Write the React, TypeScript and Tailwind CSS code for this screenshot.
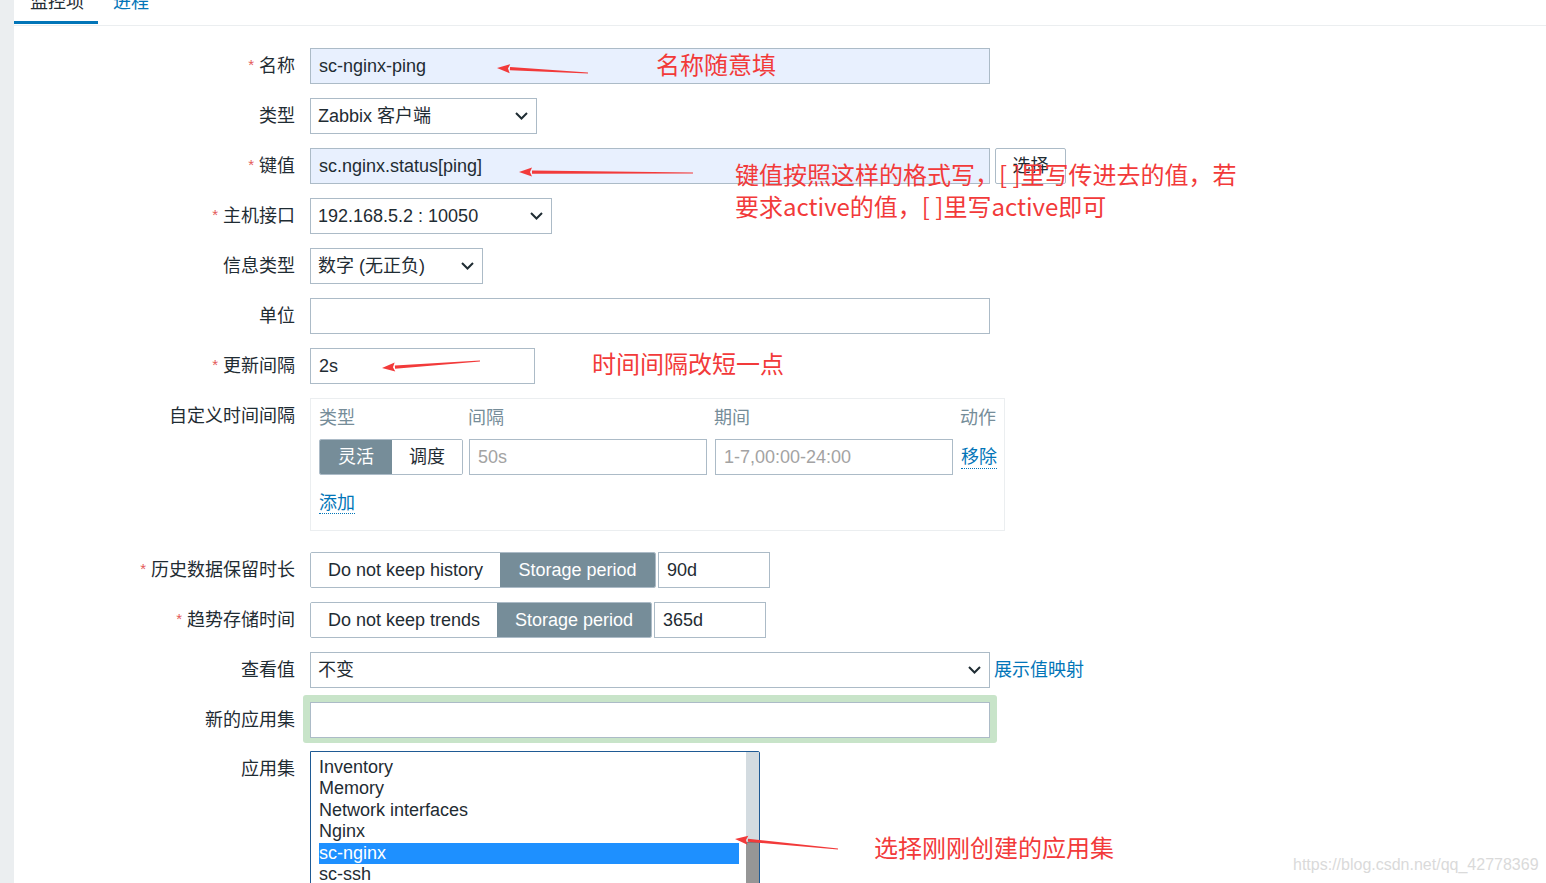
import React from 'react';
import clsx from 'clsx';

const Chevron = ({ className }: { className?: string }) => (
  <svg className={className} width="13" height="8" viewBox="0 0 13 8" fill="none">
    <polyline points="1,1 6.5,6.5 12,1" stroke="#1f2c33" strokeWidth="2" />
  </svg>
);

const Row: React.FC<{
  label: string;
  required?: boolean;
  className?: string;
  labelClass?: string;
  children: React.ReactNode;
}> = ({ label, required, className, labelClass, children }) => (
  <div className={clsx('flex items-start', className)}>
    <div
      className={clsx(
        'w-[281px] h-[36px] shrink-0 text-right leading-[36px] text-[18px] text-[#1f2c33] overflow-visible',
        labelClass
      )}
    >
      {required && <span className="text-[#e45959] text-[15px] leading-[0] mr-[5px] relative -top-[2px]">*</span>}
      {label}
    </div>
    <div className="ml-[15px] flex items-start">{children}</div>
  </div>
);

const TextInput: React.FC<{ value?: string; width: string; filled?: boolean; placeholder?: boolean }> = ({
  value,
  width,
  filled,
  placeholder,
}) => (
  <div
    className={clsx(
      'h-[36px] border border-[#acbbc7] pl-[8px] leading-[34px] text-[18px] whitespace-nowrap overflow-hidden',
      filled ? 'bg-[#e8f0fe]' : 'bg-white',
      placeholder ? 'text-[#a3a3a3]' : 'text-[#1f2c33]',
      width
    )}
  >
    {value}
  </div>
);

const Select: React.FC<{ value: string; width: string }> = ({ value, width }) => (
  <div
    className={clsx(
      'h-[36px] border border-[#acbbc7] bg-white pl-[7px] pr-[8px] flex items-center justify-between text-[18px] text-[#1f2c33]',
      width
    )}
  >
    <span>{value}</span>
    <Chevron />
  </div>
);

// segmented radio list as used for history / trends / interval type
const Segmented: React.FC<{ items: { label: string; w: string; active?: boolean }[] }> = ({ items }) => (
  <div className="flex h-[36px] border border-[#acbbc7] rounded-[2px] overflow-hidden">
    {items.map((it) => (
      <div
        key={it.label}
        className={clsx(
          'flex items-center justify-center text-[18px]',
          it.w,
          it.active ? 'bg-[#768d99] text-white' : 'bg-white text-[#1f2c33]'
        )}
      >
        {it.label}
      </div>
    ))}
  </div>
);

const Arrow: React.FC<{ x1: number; y1: number; x2: number; y2: number }> = ({ x1, y1, x2, y2 }) => {
  // tail (x1,y1) -> head (x2,y2)
  const dx = x2 - x1;
  const dy = y2 - y1;
  const len = Math.hypot(dx, dy);
  const ux = dx / len;
  const uy = dy / len;
  const px = -uy;
  const py = ux;
  const bx = x2 - ux * 13;
  const by = y2 - uy * 13;
  const head = `${x2},${y2} ${bx + px * 4.5},${by + py * 4.5} ${bx + ux * 2},${by + uy * 2} ${bx - px * 4.5},${by - py * 4.5}`;
  const body = `${x1 + px * 0.4},${y1 + py * 0.4} ${bx + px * 1.6},${by + py * 1.6} ${bx - px * 1.6},${by - py * 1.6} ${x1 - px * 0.4},${y1 - py * 0.4}`;
  return (
    <g>
      <polygon points={body} fill="#f23a3a" />
      <polygon points={head} fill="#f23a3a" />
    </g>
  );
};

export default function App() {
  return (
    <div className="relative w-[1546px] h-[883px] overflow-hidden bg-white flex font-['Liberation_Sans','Noto_Sans_CJK_SC',sans-serif]">
      <div className="w-[14px] shrink-0 bg-[#ebeef0]" />

      <div className="flex-1 flex flex-col">
        {/* tabs */}
        <div className="h-[26px] shrink-0 border-b border-[#ebeef0] flex items-start">
          <div className="h-[24px] w-[84px] border-b-[3px] border-[#0275b8] pl-[16px]">
            <span className="relative -top-[10px] text-[18px] leading-[24px] text-[#1f2c33]">监控项</span>
          </div>
          <div className="h-[24px] pl-[15px]">
            <span className="relative -top-[10px] text-[18px] leading-[24px] text-[#0275b8]">进程</span>
          </div>
        </div>

        <div className="mt-[22px] flex flex-col">
          <Row label="名称" required className="mb-[14px]">
            <TextInput value="sc-nginx-ping" width="w-[680px]" filled />
          </Row>
          <Row label="类型" className="mb-[14px]">
            <Select value="Zabbix 客户端" width="w-[227px]" />
          </Row>
          <Row label="键值" required className="mb-[14px]">
            <TextInput value="sc.nginx.status[ping]" width="w-[680px]" filled />
            <div className="ml-[5px] h-[36px] w-[71px] border border-[#acbbc7] rounded-[2px] bg-white flex items-center justify-center text-[18px] text-[#1f2c33]">
              选择
            </div>
          </Row>
          <Row label="主机接口" required className="mb-[14px]">
            <Select value="192.168.5.2 : 10050" width="w-[242px]" />
          </Row>
          <Row label="信息类型" className="mb-[14px]">
            <Select value="数字 (无正负)" width="w-[173px]" />
          </Row>
          <Row label="单位" className="mb-[14px]">
            <TextInput width="w-[680px]" />
          </Row>
          <Row label="更新间隔" required className="mb-[14px]">
            <TextInput value="2s" width="w-[225px]" />
          </Row>

          <Row label="自定义时间间隔" className="mb-[21px]" labelClass="leading-[34px]">
            <div className="w-[695px] h-[133px] border border-[#ebeef0] pl-[8px] pt-[9px]">
              <div className="flex text-[18px] leading-[20px] text-[#768d99]">
                <div className="w-[149px]">类型</div>
                <div className="w-[246px]">间隔</div>
                <div className="w-[246px]">期间</div>
                <div>动作</div>
              </div>
              <div className="mt-[11px] flex items-center">
                <Segmented
                  items={[
                    { label: '灵活', w: 'w-[72px]', active: true },
                    { label: '调度', w: 'w-[70px]' },
                  ]}
                />
                <div className="ml-[6px]">
                  <TextInput value="50s" width="w-[238px]" placeholder />
                </div>
                <div className="ml-[8px]">
                  <TextInput value="1-7,00:00-24:00" width="w-[238px]" placeholder />
                </div>
                <span className="ml-[8px] text-[18px] leading-[22px] text-[#0275b8] border-b border-dotted border-[#0275b8]">
                  移除
                </span>
              </div>
              <div className="mt-[17px]">
                <span className="text-[18px] leading-[22px] text-[#0275b8] border-b border-dotted border-[#0275b8]">
                  添加
                </span>
              </div>
            </div>
          </Row>

          <Row label="历史数据保留时长" required className="mb-[14px]">
            <Segmented
              items={[
                { label: 'Do not keep history', w: 'w-[189px]' },
                { label: 'Storage period', w: 'w-[155px]', active: true },
              ]}
            />
            <div className="ml-[2px]">
              <TextInput value="90d" width="w-[112px]" />
            </div>
          </Row>
          <Row label="趋势存储时间" required className="mb-[14px]">
            <Segmented
              items={[
                { label: 'Do not keep trends', w: 'w-[186px]' },
                { label: 'Storage period', w: 'w-[154px]', active: true },
              ]}
            />
            <div className="ml-[2px]">
              <TextInput value="365d" width="w-[112px]" />
            </div>
          </Row>
          <Row label="查看值" className="mb-[7px]">
            <Select value="不变" width="w-[680px]" />
            <span className="ml-[4px] text-[18px] leading-[36px] text-[#0275b8]">展示值映射</span>
          </Row>
          <Row label="新的应用集" className="mb-[8px]" labelClass="mt-[7px]">
            <div className="-ml-[7px] px-[7px] pt-[7px] pb-[5px] rounded-[3px] bg-[#c8e4c9]">
              <TextInput width="w-[680px]" />
            </div>
          </Row>
          <Row label="应用集">
            <div className="w-[450px] h-[140px] border border-[#1f5a94] rounded-tr-[2px] bg-white flex">
              <div className="flex-1 pl-[8px] pr-[7px] pt-[5px] text-[18px] text-[#1f2c33]">
                {['Inventory', 'Memory', 'Network interfaces', 'Nginx', 'sc-nginx', 'sc-ssh'].map((name) => (
                  <div
                    key={name}
                    className={clsx(
                      'h-[21.4px] leading-[21.4px] whitespace-nowrap',
                      name === 'sc-nginx' && 'bg-[#1e90ff] text-white'
                    )}
                  >
                    {name}
                  </div>
                ))}
              </div>
              <div className="w-[13px] flex flex-col">
                <div className="h-[90px] bg-[#d3dbe0]" />
                <div className="flex-1 bg-[#969696] border-t border-[#7c7c7c]" />
              </div>
            </div>
          </Row>
        </div>
      </div>

      {/* red notes over the form */}
      <svg className="absolute left-0 top-0 pointer-events-none" width="1546" height="883">
        <Arrow x1={588} y1={73} x2={497} y2={68} />
        <Arrow x1={693} y1={173} x2={519} y2={172} />
        <Arrow x1={480} y1={361} x2={382} y2={368} />
        <Arrow x1={838} y1={849} x2={735} y2={839} />
      </svg>
      <div className="absolute left-[656px] top-[48px] text-[24px] leading-[32px] text-[#f23a3a] font-['Noto_Sans_CJK_SC',sans-serif]">
        名称随意填
      </div>
      <div className="absolute left-[735px] top-[158px] text-[24px] leading-[32px] text-[#f23a3a] font-['Noto_Sans_CJK_SC',sans-serif] whitespace-nowrap">
        <div>键值按照这样的格式写，[ ]里写传进去的值，若</div>
        <div>要求active的值，[ ]里写active即可</div>
      </div>
      <div className="absolute left-[592px] top-[347px] text-[24px] leading-[32px] text-[#f23a3a] font-['Noto_Sans_CJK_SC',sans-serif]">
        时间间隔改短一点
      </div>
      <div className="absolute left-[874px] top-[831px] text-[24px] leading-[32px] text-[#f23a3a] font-['Noto_Sans_CJK_SC',sans-serif]">
        选择刚刚创建的应用集
      </div>
      <div className="absolute left-[1293px] top-[855px] text-[16px] leading-[20px] text-[#dadada]">
        https://blog.csdn.net/qq_42778369
      </div>
    </div>
  );
}
